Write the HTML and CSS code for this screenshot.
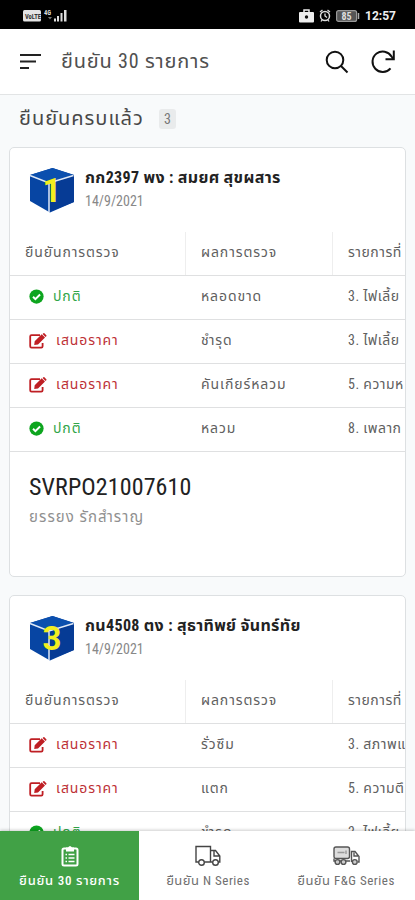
FILE: index.html
```html
<!DOCTYPE html>
<html lang="th">
<head>
  <meta charset="UTF-8">
  <meta name="viewport" content="width=device-width, initial-scale=1.0">
  <title>ยืนยัน 30 รายการ</title>
  <link rel="stylesheet" href="styles.css">
</head>
<body>
  <!-- shared icons -->
  <svg class="sprite">
    <symbol id="check" viewBox="0 0 16 16">
      <circle cx="8" cy="8" r="7.6" fill="#0da51f"/>
      <path d="M4.3 8.3l2.5 2.5 5-5" fill="none" stroke="#fff" stroke-width="2.1"/>
    </symbol>
    <symbol id="edit" viewBox="0 0 18 16">
      <path d="M11 2.2H2.5Q1.2 2.2 1.2 3.5v9.8q0 1.3 1.3 1.3h9.8q1.3 0 1.3-1.3V10" fill="none" stroke="#bf1f24" stroke-width="1.8"/>
      <path d="M5.2 12l.5-3.700 7-7 3.300 3.300-7 7z M13.6 1l.8-.7q.5-.5 1 0l1.9 1.9q.5.5 0 1l-.8.8z" fill="#bf1f24"/>
    </symbol>
    <symbol id="cube" viewBox="0 0 46 46">
      <path d="M1 8L23.500 1 45 8V35L21 45.500 1 34z" fill="#0745a3"/>
      <path d="M1 8L23.500 1 45 8 20 16z" fill="#0b4fae"/>
      <path d="M20 16L45 8V35L20 45z" fill="#063b95"/>
      <path d="M1 8.500L20 16 44.500 8.500M20 16V45" fill="none" stroke="#dfe9f7" stroke-width="1.500"/>
    </symbol>
  </svg>

  <div class="status">
    <svg class="status-left" width="46" height="14" viewBox="0 0 46 14">
      <rect x="0" y="1" width="18" height="11.500" rx="1.500" fill="#e4e4e4"/>
      <text x="2" y="9.500" font-size="6.500" font-weight="bold" fill="#333">VoLTE</text>
      <text x="21" y="5.500" font-size="6.500" font-weight="bold" fill="#ddd">4G</text>
      <path d="M25 8l2 2.500 2-2.500z" fill="#777"/>
      <path d="M31 12.500v-3h2v3zM34 12.500V7h2v5.500zM37.500 12.500V4h2v8.500zM41 12.500V1h2.500v11.500z" fill="#ddd"/>
    </svg>
    <div class="status-right">
      <svg width="15" height="14" viewBox="0 0 15 14">
        <path d="M5 3V1h5v2" fill="none" stroke="#eee" stroke-width="1.500"/>
        <rect y="3" width="15" height="10.500" rx="1" fill="#eee"/>
        <circle cx="7.500" cy="8" r="1.700" fill="#111"/>
      </svg>
      <svg width="12" height="13" viewBox="0 0 12 13">
        <circle cx="6" cy="7" r="4.500" fill="none" stroke="#ddd" stroke-width="1.500"/>
        <path d="M1 3l2.500-2M11 3L8.500 1M6 4.500V7l2 1.500M3 11l-1 1.500M9 11l1 1.500" fill="none" stroke="#ddd" stroke-width="1.300"/>
      </svg>
      <svg width="24" height="12" viewBox="0 0 24 12">
        <rect x=".6" y=".6" width="20" height="10.800" rx="2" fill="#555" stroke="#999" stroke-width="1.200"/>
        <path d="M22.500 3v6" stroke="#aaa" stroke-width="1.500"/>
        <text x="5.500" y="9.500" font-size="10" font-weight="bold" fill="#ddd">85</text>
      </svg>
      <span class="clock">12:57</span>
    </div>
  </div>

  <header class="topbar">
    <svg width="22" height="17" viewBox="0 0 22 17" fill="none" stroke="#222" stroke-width="2">
      <path d="M0 2h21M0 8.500h16M0 15h9"/>
    </svg>
    <h1 class="title">ยืนยัน 30 รายการ</h1>
    <svg class="search" width="24" height="24" viewBox="0 0 24 24" fill="none" stroke="#111" stroke-width="2">
      <circle cx="10" cy="10" r="8.300"/>
      <path d="M16 16l6.500 6.500"/>
    </svg>
    <svg width="25" height="25" viewBox="0 0 25 25" fill="none" stroke="#111" stroke-width="2">
      <path d="M19.500 19.300A10.200 10.200 0 1 1 20.500 7.500L22.500 10M22.800 1.500V10.300H14.500"/>
    </svg>
  </header>

  <main class="content">
    <div class="section-head">
      <h2 class="section-title">ยืนยันครบแล้ว</h2>
      <span class="count">3</span>
    </div>

    <section class="card">
      <div class="card-head">
        <svg class="cube" viewBox="0 0 46 46">
          <use href="#cube"/>
          <text x="23" y="35" class="cube-num">1</text>
        </svg>
        <div>
          <h3 class="name">กก2397 พง : สมยศ สุขผสาร</h3>
          <div class="date">14/9/2021</div>
        </div>
      </div>
      <div class="table">
        <div class="row row-head"><span>ยืนยันการตรวจ</span><span>ผลการตรวจ</span><span>รายการที่</span></div>
        <div class="row"><span class="ok"><svg><use href="#check"/></svg>ปกติ</span><span>หลอดขาด</span><span>3. ไฟเลี้ย</span></div>
        <div class="row"><span class="quote"><svg><use href="#edit"/></svg>เสนอราคา</span><span>ชำรุด</span><span>3. ไฟเลี้ย</span></div>
        <div class="row"><span class="quote"><svg><use href="#edit"/></svg>เสนอราคา</span><span>คันเกียร์หลวม</span><span>5. ความห</span></div>
        <div class="row"><span class="ok"><svg><use href="#check"/></svg>ปกติ</span><span>หลวม</span><span>8. เพลาก</span></div>
      </div>
      <div class="card-foot">
        <div class="po">SVRPO21007610</div>
        <div class="person">ยรรยง รักสำราญ</div>
      </div>
    </section>

    <section class="card">
      <div class="card-head">
        <svg class="cube" viewBox="0 0 46 46">
          <use href="#cube"/>
          <text x="23" y="35" class="cube-num">3</text>
        </svg>
        <div>
          <h3 class="name">กน4508 ตง : สุธาทิพย์ จันทร์ทัย</h3>
          <div class="date">14/9/2021</div>
        </div>
      </div>
      <div class="table">
        <div class="row row-head"><span>ยืนยันการตรวจ</span><span>ผลการตรวจ</span><span>รายการที่</span></div>
        <div class="row"><span class="quote"><svg><use href="#edit"/></svg>เสนอราคา</span><span>รั่วซึม</span><span>3. สภาพแ</span></div>
        <div class="row"><span class="quote"><svg><use href="#edit"/></svg>เสนอราคา</span><span>แตก</span><span>5. ความตึ</span></div>
        <div class="row"><span class="ok"><svg><use href="#check"/></svg>ปกติ</span><span>ชำรุด</span><span>3. ไฟเลี้ย</span></div>
      </div>
    </section>
  </main>

  <nav class="tabs">
    <a class="tab active">
      <svg width="18" height="22" viewBox="0 0 18 22" fill="none" stroke="#fff">
        <rect x="1.500" y="3.500" width="15" height="17" rx="1.500" stroke-width="2"/>
        <path d="M5 2.500h2q2-3 4 0h2v4H5z" fill="#fff" stroke="none"/>
        <path d="M4.500 9.500h1.500M7.500 9.500h6M4.500 13h1.500M7.500 13h6M4.500 16.500h1.500M7.500 16.500h6" stroke-width="1.500"/>
      </svg>
      <span>ยืนยัน 30 รายการ</span>
    </a>
    <a class="tab">
      <svg width="26" height="22" viewBox="0 0 26 22" fill="none" stroke="#444" stroke-width="1.400">
        <path d="M3.500 17H1V1.500h14.500V17H9.500M15.500 5.500h5L24.800 11v6h-1.500M17.500 17h-2M19 6v5h5.500"/>
        <circle cx="6.500" cy="17.500" r="2.800"/>
        <circle cx="20.500" cy="17.500" r="2.800"/>
      </svg>
      <span>ยืนยัน N Series</span>
    </a>
    <a class="tab">
      <svg width="27" height="22" viewBox="0 0 27 22" fill="none" stroke="#555" stroke-width="1.400">
        <rect x="1" y="2" width="15.500" height="11.500" rx="2" fill="#ddd"/>
        <path d="M4.500 7.500h7M13 5.500v3.500" stroke="#999"/>
        <path d="M1 13.500v2.500h16M18.500 17V6.500h3.500l4 5V17h-1M21 7.500V11h4"/>
        <circle cx="4.500" cy="17" r="2.400" fill="#ccc"/>
        <circle cx="10.500" cy="17" r="2.400" fill="#ccc"/>
        <circle cx="21.800" cy="17" r="2.400" fill="#ccc"/>
      </svg>
      <span>ยืนยัน F&amp;G Series</span>
    </a>
  </nav>
</body>
</html>
```
FILE: styles.css
```css
* {
  box-sizing: border-box;
}

body {
  margin: 0;
  height: 900px;
  display: flex;
  flex-direction: column;
  overflow: hidden;
  background-color: #f8fafb;
  color: #606060;
  font-family: Roboto, "Noto Sans Thai", "Noto Sans", sans-serif;
  font-stretch: 75%;
  font-size: 14px;
}

h1, h2, h3 {
  margin: 0;
  font-weight: normal;
}

.sprite {
  display: none;
}

.status {
  flex: none;
  height: 29px;
  padding: 2px 23px 0;
  display: flex;
  align-items: center;
  justify-content: space-between;
  background-color: #000;
}

.status-right {
  display: flex;
  align-items: center;
  gap: 5px;
}

.clock {
  color: #eee;
  font-size: 12px;
  font-weight: bold;
  font-stretch: 90%;
  width: 27px;
  white-space: nowrap;
}

.topbar {
  flex: none;
  height: 66px;
  padding: 0 19px 0 20px;
  display: flex;
  align-items: center;
  background-color: #fff;
  border-bottom: 1px solid #e2e4e5;
}

.title {
  flex: 1;
  margin-left: 19px;
  font-size: 20px;
  letter-spacing: 0.85px;
  color: #505050;
}

.search {
  margin-right: 22px;
}

.content {
  flex: 1;
  min-height: 0;
  padding: 0 9px;
  overflow: hidden;
}

.section-head {
  height: 52px;
  padding: 0 10px 5px;
  display: flex;
  align-items: center;
}

.section-title {
  width: 140px;
  font-size: 20px;
  letter-spacing: 1px;
  white-space: nowrap;
  color: #484848;
}

.count {
  width: 17px;
  height: 20px;
  line-height: 20px;
  text-align: center;
  border-radius: 3px;
  background-color: #e9ebec;
  color: #777;
}

.card {
  height: 430px;
  margin-bottom: 18px;
  border: 1px solid #dde0e2;
  border-radius: 5px;
  background-color: #fff;
  overflow: hidden;
}

.card-head {
  height: 84px;
  padding: 19px 0 0 19px;
  display: flex;
  gap: 10px;
}

.cube {
  width: 46px;
  height: 46px;
}

.cube-num {
  font-size: 33px;
  font-weight: bold;
  font-stretch: 100%;
  text-anchor: middle;
  fill: #f4ee20;
}

.name {
  height: 23px;
  line-height: 22px;
  font-size: 16px;
  font-weight: bold;
  letter-spacing: 0.35px;
  white-space: nowrap;
  color: #222;
}

.date {
  line-height: 22px;
  font-size: 14px;
  color: #888;
}

.row {
  height: 44px;
  display: grid;
  grid-template-columns: 176px 147px 72px;
  border-bottom: 1px solid #dfe0e1;
  white-space: nowrap;
  letter-spacing: 0.9px;
}

.row span {
  padding-left: 15px;
  line-height: 41px;
}

.row span:last-child {
  letter-spacing: 0.5px;
}

.row-head span {
  border-right: 1px solid #eee;
}

.row-head span:last-child {
  border-right: none;
}

.row .ok, .row .quote {
  display: flex;
  align-items: center;
  padding: 0 0 2px 19px;
}

.ok {
  color: #30a548;
}

.ok svg {
  width: 15px;
  height: 15px;
  margin-right: 9px;
}

.quote {
  color: #bd3035;
}

.quote svg {
  width: 18px;
  height: 16px;
  margin-right: 9px;
}

.card-foot {
  padding: 19px 19px;
}

.po {
  line-height: 32px;
  font-size: 24px;
  letter-spacing: 0.1px;
  color: #222;
}

.person {
  line-height: 28px;
  font-size: 15px;
  letter-spacing: 1.1px;
  color: #909090;
}

.tabs {
  flex: none;
  height: 69px;
  display: grid;
  grid-template-columns: 139px 138px 138px;
  background-color: #fff;
  box-shadow: 0 -1px 3px rgba(0, 0, 0, 0.2);
}

.tab {
  padding-top: 14px;
  display: flex;
  flex-direction: column;
  align-items: center;
  gap: 4px;
  font-size: 13px;
  letter-spacing: 0.5px;
  white-space: nowrap;
  color: #707070;
}

.tab.active {
  background-color: #41a146;
  color: #fff;
  font-weight: 500;
  letter-spacing: 0.75px;
}
```
